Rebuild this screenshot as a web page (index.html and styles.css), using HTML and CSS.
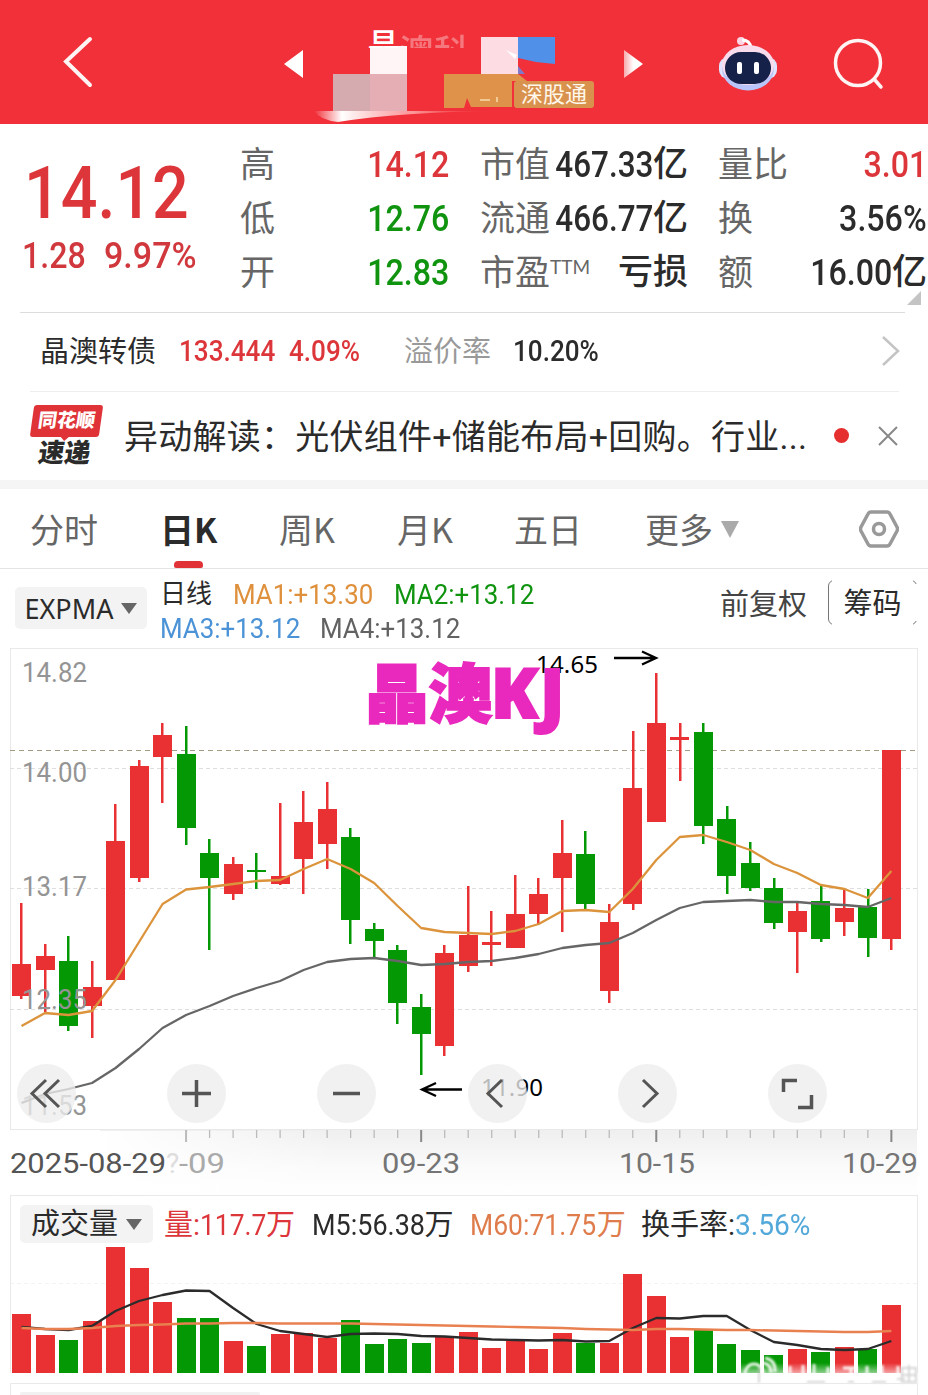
FILE: index.html
```html
<!DOCTYPE html>
<html lang="zh-CN">

<head>
    <meta charset="UTF-8">
    <meta name="viewport" content="width=device-width, initial-scale=1.0">
    <title>晶澳 日K</title>
    <link rel="stylesheet" href="styles.css">
</head>

<body>

    <header class="topbar">
        <svg class="back" width="34" height="56" viewBox="0 0 34 56"><path d="M30 5 L6 27.500 L30 51"/></svg>
        <svg class="title" width="370" height="124" viewBox="280 0 370 124">
            <defs>
                <linearGradient id="smear" x1="0" x2="1"><stop offset="0" stop-color="#fff" stop-opacity="0"/><stop offset=".15" stop-color="#fff"/><stop offset=".55" stop-color="#fbb" stop-opacity=".7"/><stop offset="1" stop-color="#f13039" stop-opacity="0"/></linearGradient>
                <linearGradient id="next" x1="0" x2="1"><stop offset="0" stop-color="#f8a9ac"/><stop offset=".5" stop-color="#fff"/></linearGradient>
                <clipPath id="nameTop"><rect x="360" y="26" width="110" height="22"/></clipPath>
            </defs>
            <path d="M284 64 L303 50 V78 Z" fill="#fff"/>
            <path d="M643 64 L624 50 V78 Z" fill="url(#next)"/>
            <rect x="370" y="46" width="37" height="28" fill="#fff4f6"/>
            <g clip-path="url(#nameTop)">
                <text x="366" y="59" class="name">晶</text>
                <text x="399" y="65" class="name faint">澳科技</text>
            </g>
            <rect x="333" y="74" width="37" height="37" fill="#d6abaf"/>
            <rect x="370" y="74" width="37" height="37" fill="#e5aeb4"/>
            <rect x="481" y="37" width="37" height="37" fill="#fddce4"/>
            <path d="M506 50 L517 55 L515 59 Z" fill="#fff"/>
            <path d="M518 37 H555 V64 L536 62 L518 58 Z" fill="#5090e8"/>
            <path d="M518 66 L525 74 H518 Z" fill="#8078c8"/>
            <path d="M444 74 H518 L527 81 H512 V107 H471 L467 98 L464 108 H444 Z" fill="#df934a"/>
            <path d="M480 100 h10 M497 97 v5" stroke="#f8dcae" stroke-width="1.500"/>
            <path d="M314 111 H500 Q400 112 338 122 Q320 120 314 111 Z" fill="url(#smear)"/>
            <rect x="514" y="81" width="80" height="27" rx="3" fill="#d9924e"/>
            <text x="521" y="102" class="tag">深股通</text>
        </svg>
        <svg class="robot" width="60" height="60" viewBox="0 0 60 60">
            <circle cx="23" cy="9" r="4" fill="#fbd5e4"/>
            <path d="M24 8 Q32 8 33 16" fill="none" stroke="#fff" stroke-width="3"/>
            <rect x="1" y="25" width="58" height="22" rx="9" fill="#dfe3ff"/>
            <ellipse cx="30" cy="37" rx="26" ry="21.500" fill="#b9c5fa"/>
            <ellipse cx="30" cy="33" rx="26" ry="20" fill="#f9dcec"/>
            <rect x="7" y="20" width="46" height="32" rx="16" fill="#16214a"/>
            <rect x="19" y="30" width="5" height="12" rx="2" fill="#fff"/>
            <rect x="36" y="30" width="5" height="12" rx="2" fill="#fff"/>
        </svg>
        <svg class="search" width="52" height="52" viewBox="0 0 52 52"><circle cx="25" cy="25" r="22.500"/><path d="M41 41 L48 49"/></svg>
    </header>

    <section class="quote">
        <div class="price">
            <div class="price-now num">14.12</div>
            <div class="price-change"><span class="num">1.28</span><span class="num">9.97%</span></div>
        </div>
        <dl class="stats">
            <dt>高</dt><dd class="red"><span class="num">14.12</span></dd>
            <dt>低</dt><dd class="green"><span class="num">12.76</span></dd>
            <dt>开</dt><dd class="green"><span class="num">12.83</span></dd>
        </dl>
        <dl class="stats">
            <dt>市值</dt><dd><span class="num">467.33</span>亿</dd>
            <dt>流通</dt><dd><span class="num">466.77</span>亿</dd>
            <dt>市盈<sup>TTM</sup></dt><dd>亏损</dd>
        </dl>
        <dl class="stats">
            <dt>量比</dt><dd class="red"><span class="num">3.01</span></dd>
            <dt>换</dt><dd><span class="num">3.56%</span></dd>
            <dt>额</dt><dd><span class="num">16.00</span>亿</dd>
        </dl>
        <i class="corner"></i>
    </section>

    <section class="bond">
        <span class="label">晶澳转债</span>
        <span class="num red">133.444</span>
        <span class="num red">4.09%</span>
        <span class="label muted">溢价率</span>
        <span class="num">10.20%</span>
        <svg width="20" height="32" viewBox="0 0 20 32"><path d="M2 2 L17 16 L2 30"/></svg>
    </section>

    <section class="news">
        <div class="news-logo">
            <b class="logo-top">同花顺</b>
            <b class="logo-bottom">速递</b>
        </div>
        <p>异动解读：光伏组件+储能布局+回购。行业...</p>
        <i class="dot"></i>
        <svg width="22" height="22" viewBox="0 0 22 22"><path d="M2 2 L20 20 M20 2 L2 20"/></svg>
    </section>

    <nav class="tabs">
        <a>分时</a>
        <a class="active">日K</a>
        <a>周K</a>
        <a>月K</a>
        <a>五日</a>
        <a>更多<i class="caret"></i></a>
        <svg width="40" height="38" viewBox="0 0 40 38"><path d="M12 2 H28 Q30 2 31 4 L38 17 Q39 19 38 21 L31 34 Q30 36 28 36 H12 Q10 36 9 34 L2 21 Q1 19 2 17 L9 4 Q10 2 12 2 Z"/><circle cx="20" cy="19" r="5.500"/></svg>
    </nav>

    <section class="indicator">
        <button class="pick">EXPMA<i class="caret"></i></button>
        <div class="legend">
            <span>日线</span><span class="num orange">MA1:+13.30</span><span class="num green">MA2:+13.12</span>
        </div>
        <div class="legend second">
            <span class="num blue">MA3:+13.12</span><span class="num gray">MA4:+13.12</span>
        </div>
        <span class="adjust">前复权</span>
        <button class="chips">筹码</button>
    </section>

    <section class="kline">
        <svg id="kline" width="928" height="547" viewBox="0 648 928 547">
            <defs>
                <linearGradient id="shade" x1="0" x2="0" y1="0" y2="1"><stop offset="0" stop-color="#efefef"/><stop offset=".6" stop-color="#fbfbfb"/><stop offset="1" stop-color="#fff"/></linearGradient>
                <linearGradient id="fadeLeft"><stop offset="0" stop-color="#fff"/><stop offset="1" stop-color="#fff" stop-opacity="0"/></linearGradient>
            </defs>
            <rect x="100" y="1130" width="817" height="65" fill="url(#shade)"/>
            <rect x="99" y="1131" width="240" height="64" fill="url(#fadeLeft)"/>
            <rect class="frame" x="10.500" y="648.500" width="907" height="481"/>
            <path class="grid" d="M10 768.500 H917 M10 888.500 H917 M10 1009.500 H917"/>
            <path class="last" d="M10 750.500 H917"/>
            <g id="candles"></g>
            <g class="scale">
                <text x="22" y="682" textLength="65">14.82</text>
                <text x="22" y="782" textLength="65">14.00</text>
                <text x="22" y="896" textLength="65">13.17</text>
                <text x="22" y="1009" textLength="65">12.35</text>
                <text x="22" y="1115" textLength="65">11.53</text>
            </g>
            <g id="averages"></g>
            <text class="mark" x="536" y="673" textLength="62">14.65</text>
            <text class="mark" x="481" y="1096" textLength="62">11.90</text>
            <path class="arrow" d="M614 658 H655 M642 651.500 L656 658 L642 664.500 M462 1089.500 H423 M436 1083 L422 1089.500 L436 1096"/>
            <text class="brand" x="365" y="717">晶澳<tspan class="brand-latin" x="491" y="718">K</tspan><tspan class="brand-latin" x="540" y="718">J</tspan></text>
            <g id="ticks"></g>
            <g class="dates">
                <text x="10" y="1173" class="from" textLength="156">2025-08-29</text>
                <text x="166" y="1173" class="ghost">?</text>
                <text x="179" y="1173" class="half" textLength="46">-09</text>
                <text x="382" y="1173" textLength="78">09-23</text>
                <text x="619" y="1173" textLength="76">10-15</text>
                <text x="842" y="1173" textLength="76">10-29</text>
            </g>
        </svg>
        <div class="tools">
            <button><svg viewBox="0 0 59 59"><path d="M29 16 L15 29.500 L29 43 M42 16 L28 29.500 L42 43"/></svg></button>
            <button><svg viewBox="0 0 59 59"><path class="thick" d="M15 29.500 H44 M29.500 16 V43"/></svg></button>
            <button><svg viewBox="0 0 59 59"><path class="thick" d="M16 29.500 H43"/></svg></button>
            <button><svg viewBox="0 0 59 59"><path d="M34 16 L20 29.500 L34 43"/></svg></button>
            <button><svg viewBox="0 0 59 59"><path d="M25 16 L39 29.500 L25 43"/></svg></button>
            <button><svg viewBox="0 0 59 59"><path class="thick" d="M15.500 28 V16.500 H29 M30 43.500 H43.500 V31"/></svg></button>
        </div>
    </section>

    <section class="volume">
        <div class="volume-head">
            <button class="pick">成交量<i class="caret"></i></button>
            <span class="red">量:<span class="num">117.7</span>万</span>
            <span><span class="num long">M5:56.38</span>万</span>
            <span class="coral"><span class="num long">M60:71.75</span>万</span>
            <span>换手率:<span class="num sky">3.56%</span></span>
        </div>
        <svg id="volume" width="928" height="148" viewBox="0 1247 928 148">
            <defs>
                <linearGradient id="fog" x1="0" x2="0" y1="0" y2="1"><stop offset="0" stop-color="#fff" stop-opacity="0"/><stop offset=".8" stop-color="#fff" stop-opacity=".95"/></linearGradient>
                <filter id="soft"><feGaussianBlur stdDeviation=".8"/></filter>
            </defs>
            <path class="grid faint" d="M10 1283.500 H917"/>
            <g id="bars"></g>
            <g id="volumeLines"></g>
            <rect x="741" y="1363" width="177" height="22" fill="url(#fog)"/>
            <g class="watermark" filter="url(#soft)">
                <ellipse cx="754" cy="1374" rx="9" ry="10"/>
                <path d="M762 1363 q9 0 9 10 M765 1358 q11 2 10 14 M790 1366 v16 M803 1365 v17 M814 1364 v18 M828 1367 v15 M843 1368 h15 M851 1368 v15 M867 1366 v17 M882 1365 v18 M898 1366 v16"/>
            </g>
            <g class="watermark dark" filter="url(#soft)">
                <path d="M759 1367 v16 M807 1382 h18 M848 1382 h6 M872 1382 h14 M897 1379 h8 M909 1365 v18 M902 1368 h14 v14 h-14 z M902 1375 h13"/>
            </g>
            <path class="frame" d="M10.500 1395 V1383.500 H917.500 V1395"/>
            <path d="M20 1395 V1394 Q20 1392 22 1392 H258 Q260 1392 260 1394 V1395 Z" fill="#f1f1f1"/>
        </svg>
    </section>

    <script src="chart.js"></script>

</body>

</html>
```
FILE: styles.css
```css
* {
    box-sizing: border-box;
}

body {
    width: 928px;
    height: 1395px;
    margin: 0;
    overflow: hidden;
    background-color: #fff;
    color: #2b2b2b;
    font-family: Roboto, "Noto Sans CJK SC", sans-serif;
}

svg {
    display: block;
    flex: none;
}

button {
    padding: 0;
    border: 0;
    background: none;
    color: inherit;
    font: inherit;
}

i {
    display: inline-block;
}

.red { color: #dc363b; }
.green { color: #109410; }
.orange { color: #df903c; }
.blue { color: #4b93d6; }
.gray { color: #626262; }
.coral { color: #df7c4c; }
.sky { color: #52a8d8; }
.muted { color: #999; }

/* narrow figures */
.num {
    display: inline-block;
    font-weight: 500;
    transform: scaleX(.87);
    transform-origin: right center;
    white-space: nowrap;
}

/* header */
.topbar {
    display: flex;
    align-items: center;
    height: 124px;
    background-color: #f13039;
}

.back {
    margin-left: 60px;
}

.back path,
.search {
    fill: none;
    stroke: #fff4f4;
    stroke-width: 4;
    stroke-linecap: round;
}

.title {
    margin-left: 186px;
}

.name {
    fill: #fff;
    font-size: 35px;
    font-weight: 500;
}

.faint {
    opacity: .35;
}

.tag {
    fill: #fff8ec;
    font-size: 22px;
}

.robot {
    margin-left: 68px;
}

.search {
    margin: 4px 0 0 55px;
    stroke-width: 3.5;
}

/* quote */
.quote {
    position: relative;
    display: grid;
    grid-template-columns: 240px 240px 238px 209px;
    height: 188px;
    padding-top: 14px;
}

.quote .stats:nth-child(2) {
    margin-right: 31px;
}

.quote .stats:nth-child(3) {
    margin-right: 30px;
}

.price-now {
    margin: 16px 0 0 24px;
    color: #dc363b;
    font-size: 73px;
    line-height: 78px;
    transform: scaleX(.885);
    transform-origin: left center;
}

.price-change {
    display: grid;
    grid-template-columns: 82px auto;
    margin: 1px 0 0 22px;
    color: #d0383d;
    font-size: 37px;
    line-height: 46px;
}

.price-change .num {
    transform-origin: left center;
}

.price-change .num:last-child {
    transform: scaleX(.92);
}

.stats {
    display: grid;
    grid-template-columns: auto 1fr;
    grid-auto-rows: 54px;
    margin: 0;
    font-size: 35px;
    line-height: 54px;
}

.stats dt {
    padding-top: 1px;
    color: #666;
    white-space: nowrap;
}

.stats sup {
    position: relative;
    top: 2px;
    font-family: Lato, sans-serif;
    font-size: 19px;
    line-height: 0;
}

.stats dd {
    display: flex;
    justify-content: flex-end;
    margin: 0;
    font-weight: 500;
    white-space: nowrap;
}

.stats .num {
    margin-left: -60px;
    font-size: 37px;
}

.stats:nth-child(3) .num {
    transform: scaleX(.85);
}

.corner {
    position: absolute;
    right: 7px;
    bottom: 7px;
    border: 7px solid transparent;
    border-right-color: #c4c4c4;
    border-bottom-color: #c4c4c4;
}

/* bond */
.bond {
    display: grid;
    grid-template-columns: 139px 110px 115px 109px 368px 20px;
    align-items: center;
    height: 79px;
    margin: 0 23px 0 20px;
    padding: 0 0 2px 20px;
    border-top: 1px solid #ddd;
    font-size: 29px;
}

.bond .label {
    margin-top: -4px;
}

.bond .num {
    justify-self: start;
    transform: scaleX(.9);
    transform-origin: left center;
}

.bond svg,
.news svg {
    fill: none;
    stroke: #c4c4c4;
    stroke-width: 2.5;
}

/* news */
.news {
    display: flex;
    align-items: center;
    height: 89px;
    margin: 0 29px 0 30px;
    border-top: 1px solid #eee;
}

.news-logo {
    width: 94px;
    height: 63px;
    text-align: center;
}

.logo-top,
.logo-bottom {
    display: block;
    width: 69px;
    transform: skewX(-8deg);
    font-weight: 900;
}

.logo-top {
    position: relative;
    height: 32px;
    margin-left: 2px;
    border-radius: 3px;
    background-color: #df3338;
    color: #fff;
    font-size: 19px;
    line-height: 31px;
}

.logo-top::after {
    content: "";
    position: absolute;
    left: 31px;
    top: 32px;
    border: 4px solid transparent;
    border-top-color: #df3338;
    border-bottom: 0;
}

.logo-bottom {
    color: #2b2b2b;
    font-size: 26px;
    line-height: 33px;
}

.news p {
    width: 710px;
    margin: 0;
    padding-bottom: 3px;
    font-size: 34px;
    letter-spacing: .25px;
    white-space: nowrap;
}

.dot {
    width: 15px;
    height: 15px;
    margin: 0 28px 1px 0;
    border-radius: 50%;
    background-color: #e5302f;
}

.news svg {
    stroke: #888;
    stroke-width: 2;
}

/* tabs */
.tabs {
    display: grid;
    grid-template-columns: 130px 119px 118px 117px 131px 214px 40px;
    align-items: center;
    height: 89px;
    padding-left: 30px;
    border-top: 9px solid #f5f5f5;
    border-bottom: 1px solid #e4e4e4;
    color: #666;
    font-family: "Noto Sans CJK SC", sans-serif;
    font-size: 34px;
    line-height: 79px;
}

.tabs .active {
    position: relative;
    color: #2b2b2b;
    font-weight: 700;
}

.tabs .active::after {
    content: "";
    position: absolute;
    left: 14px;
    bottom: 0;
    width: 29px;
    height: 7px;
    border-radius: 4px 4px 2px 2px;
    background-color: #e03237;
}

.tabs svg {
    fill: none;
    stroke: #999;
    stroke-width: 3.5;
}

.caret {
    border: 8px solid transparent;
    border-top: 11px solid #666;
    border-bottom: 0;
}

.tabs .caret {
    margin: 0 0 5px 8px;
    border-width: 17px 9px 0;
    border-top-color: #aaa;
}

/* indicator */
.indicator {
    display: grid;
    grid-template-columns: 132px 560px 121px 89px;
    grid-template-rows: 34px 34px;
    height: 79px;
    padding: 8px 0 0 15px;
    font-size: 29px;
}

.pick {
    display: flex;
    align-items: center;
    justify-content: center;
    gap: 8px;
    border-radius: 5px;
    background-color: #f3f3f3;
}

.indicator .pick {
    grid-row: 1 / 3;
    height: 42px;
    margin-top: 10px;
    font-family: "Noto Sans", sans-serif;
    font-size: 27px;
}

.legend {
    grid-column: 2;
    grid-row: 1;
    display: grid;
    grid-template-columns: 73px 161px auto;
    margin-left: 13px;
    padding-top: 1px;
    font-size: 26px;
    line-height: 33px;
}

.legend.second {
    grid-row: 2;
    grid-template-columns: 160px auto;
}

.legend .num {
    justify-self: start;
    font-size: 28px;
    font-weight: 400;
    transform: scaleX(.925);
    transform-origin: left center;
}

.adjust {
    grid-column: 3;
    grid-row: 1 / 3;
    margin-left: 13px;
    color: #444;
    line-height: 57px;
}

/* only the left edge and the corners are outlined */
.chips {
    position: relative;
    z-index: 0;
    grid-column: 4;
    grid-row: 1 / 3;
    width: 89px;
    height: 45px;
    margin-top: 3px;
    padding-top: 3px;
    border: 1px solid #777;
    border-radius: 6px;
    line-height: 40px;
}

.chips::before,
.chips::after {
    content: "";
    position: absolute;
    z-index: -1;
    background-color: #fff;
}

.chips::before {
    inset: -1px 3px -1px 3px;
}

.chips::after {
    inset: 3px -1px 3px 40px;
}

/* charts */
.kline {
    position: relative;
    height: 547px;
}

.frame {
    fill: none;
    stroke: #e9e9e9;
}

.grid,
.last {
    stroke: #dedede;
    stroke-dasharray: 4 3;
}

.last {
    stroke: #a59b82;
    stroke-dasharray: 5 4;
}

.up { fill: #e93134; }
.down { fill: #049804; }

polyline {
    fill: none;
    stroke-width: 2.3;
    stroke-linejoin: round;
}

.scale {
    fill: #949494;
    font-size: 28px;
}

.mark {
    fill: #000;
    font-family: "Noto Sans", sans-serif;
    font-size: 24px;
}

.arrow {
    fill: none;
    stroke: #000;
    stroke-width: 2.3;
}

.brand {
    fill: #e929bd;
    stroke: #e929bd;
    stroke-width: 2;
    font-size: 63.5px;
    font-weight: 900;
}

.brand-latin {
    font-family: "Noto Sans", sans-serif;
    font-size: 69px;
}

.dates {
    fill: #757575;
    font-size: 28px;
}

.from { fill: #555; }
.half { fill: #aaa; }
.ghost { fill: #ddd; }

.tools {
    position: absolute;
    left: 17px;
    top: 416px;
    display: flex;
    gap: 91.2px;
}

.tools button {
    width: 59px;
    height: 59px;
    border-radius: 50%;
    background-color: rgba(237, 237, 237, .78);
}

.tools path {
    fill: none;
    stroke: #555;
    stroke-width: 3;
}

.tools .thick {
    stroke-width: 3.5;
}

/* volume */
.volume-head {
    display: grid;
    grid-template-columns: 144px 148px 158px 171px auto;
    height: 52px;
    margin: 0 10px;
    padding: 8px 0 0 9px;
    border: 1px solid #e9e9e9;
    border-bottom: 0;
    font-size: 29px;
    line-height: 42px;
    white-space: nowrap;
}

.volume-head > span {
    display: flex;
}

.volume-head .num {
    margin-right: -7px;
    font-weight: 400;
    transform: scaleX(.91);
    transform-origin: left center;
}

.volume-head .long {
    margin-right: -9px;
    transform: scaleX(.93);
}

.volume-head .coral .long {
    margin-right: -11px;
    transform: scaleX(.915);
}

.volume-head .sky {
    transform: scaleX(.97);
}

.volume-head .pick {
    width: 133px;
    height: 38px;
    margin-top: 1px;
}

.sides {
    stroke: #e9e9e9;
}

.watermark {
    fill: none;
    stroke: #fff;
    stroke-width: 3;
    opacity: .9;
}

.watermark.dark {
    stroke: #bbb;
    stroke-width: 2;
    opacity: .6;
}
```
FILE: chart.js
```js
// one row per day: high, body top, body bottom, low, volume top, 1 = up
const days = [
    [903, 964, 996, 999, 1314, 1], [944, 956, 970, 1012, 1335, 1],
    [936, 961, 1026, 1031, 1340, 0], [961, 987, 1006, 1038, 1321, 1],
    [804, 841, 980, 980, 1247, 1], [760, 766, 878, 882, 1268, 1],
    [723, 735, 757, 803, 1302, 1], [726, 754, 828, 845, 1318, 0],
    [839, 853, 878, 950, 1318, 0], [857, 864, 894, 900, 1341, 1],
    [853, 870, 872, 889, 1346, 0], [803, 876, 884, 885, 1334, 1],
    [791, 822, 859, 894, 1333, 1], [782, 809, 844, 869, 1338, 1],
    [828, 837, 920, 944, 1320, 0], [923, 929, 941, 958, 1344, 0],
    [945, 950, 1003, 1024, 1339, 0], [994, 1007, 1034, 1075, 1343, 0],
    [945, 953, 1046, 1056, 1336, 1], [886, 935, 966, 972, 1332, 1],
    [911, 942, 945, 966, 1348, 1], [875, 914, 948, 948, 1341, 1],
    [878, 894, 914, 924, 1349, 1], [820, 853, 878, 932, 1333, 1],
    [831, 854, 904, 909, 1343, 0], [904, 922, 991, 1003, 1343, 1],
    [731, 788, 904, 910, 1274, 1], [673, 723, 822, 822, 1296, 1],
    [723, 737, 740, 781, 1337, 1], [723, 732, 826, 844, 1330, 0],
    [806, 819, 876, 894, 1344, 0], [842, 863, 888, 891, 1350, 0],
    [878, 888, 923, 929, 1355, 0], [903, 911, 932, 973, 1349, 1],
    [885, 901, 939, 942, 1352, 0], [890, 908, 922, 936, 1347, 1],
    [889, 907, 938, 957, 1349, 0], [750, 750, 939, 950, 1305, 1]
];

const ma1 = [1026, 1013, 1015, 1011, 980, 942, 904, 889.5, 887, 884, 881, 880, 869, 859, 869, 883, 906, 928, 932, 933, 934, 931, 924, 911, 910, 912, 889, 860, 837, 835, 842, 850, 864, 873, 885, 889, 898, 871];
const ma4 = [1103, 1094, 1089, 1083, 1068, 1049, 1028, 1015, 1006, 996, 988, 981, 970, 962, 959, 958, 961, 965, 964, 962, 961, 958, 954, 948, 945, 943, 933, 920, 908, 902, 901, 900, 902, 902, 904, 905, 907, 898];
const m5 = [1327, 1329, 1330, 1326, 1311, 1301, 1295, 1290.5, 1291, 1308, 1324, 1331, 1334, 1337, 1334, 1333.5, 1334, 1336, 1336.5, 1338, 1339.5, 1340, 1340.5, 1340, 1341.5, 1341, 1328, 1318, 1318.5, 1316, 1316, 1330, 1342, 1345, 1349, 1350, 1349, 1341];
const m60 = [1328, 1329, 1329, 1328, 1326, 1325, 1324.5, 1323.5, 1323.5, 1323, 1323, 1323.5, 1323.5, 1323.5, 1323.5, 1324, 1324.5, 1325, 1325.5, 1326, 1326.5, 1327, 1327.5, 1328, 1329, 1329.5, 1330, 1329, 1329, 1329.5, 1330, 1330, 1330.5, 1331, 1331.5, 1332, 1332, 1331];

function x(i) {
    return 21.5 + i * 23.51;
}

function rect(cx, top, bottom, width, up) {
    let left = Math.round(cx - width / 2);
    return `<rect class="${up ? "up" : "down"}" x="${left}" y="${top}" width="${width}" height="${bottom - top}"/>`;
}

function line(values, color) {
    return `<polyline stroke="${color}" points="${values.map((y, i) => x(i) + "," + y).join(" ")}"/>`;
}

let candles = "";
let bars = "";
let ticks = "";

days.forEach(function (d, i) {
    candles += rect(x(i), d[0], d[3], 2.5, d[5]) + rect(x(i), d[1], d[2], 19, d[5]);
    bars += rect(x(i), d[4], 1373, 19, d[5]);
    if (i >= 7) {
        let major = (i - 7) % 10 === 0;
        ticks += `<path d="M${x(i)} 1130 v${major ? 12 : 8}" stroke="${major && i > 7 ? "#888" : "#bbb"}" stroke-width="${major ? 2 : 1.3}"/>`;
    }
});

document.getElementById("candles").innerHTML = candles;
document.getElementById("bars").innerHTML = bars + '<path class="sides" d="M10.500 1247 V1373 M917.500 1247 V1373"/>';
document.getElementById("ticks").innerHTML = ticks;
document.getElementById("averages").innerHTML = line(ma4, "#666") + line(ma1, "#dc943c");
document.getElementById("volumeLines").innerHTML = line(m5, "#2b2b2b") + line(m60, "#e88050");

document.querySelectorAll(".scale text, .dates text").forEach(function (t) {
    t.setAttribute("lengthAdjust", "spacingAndGlyphs");
});
```
